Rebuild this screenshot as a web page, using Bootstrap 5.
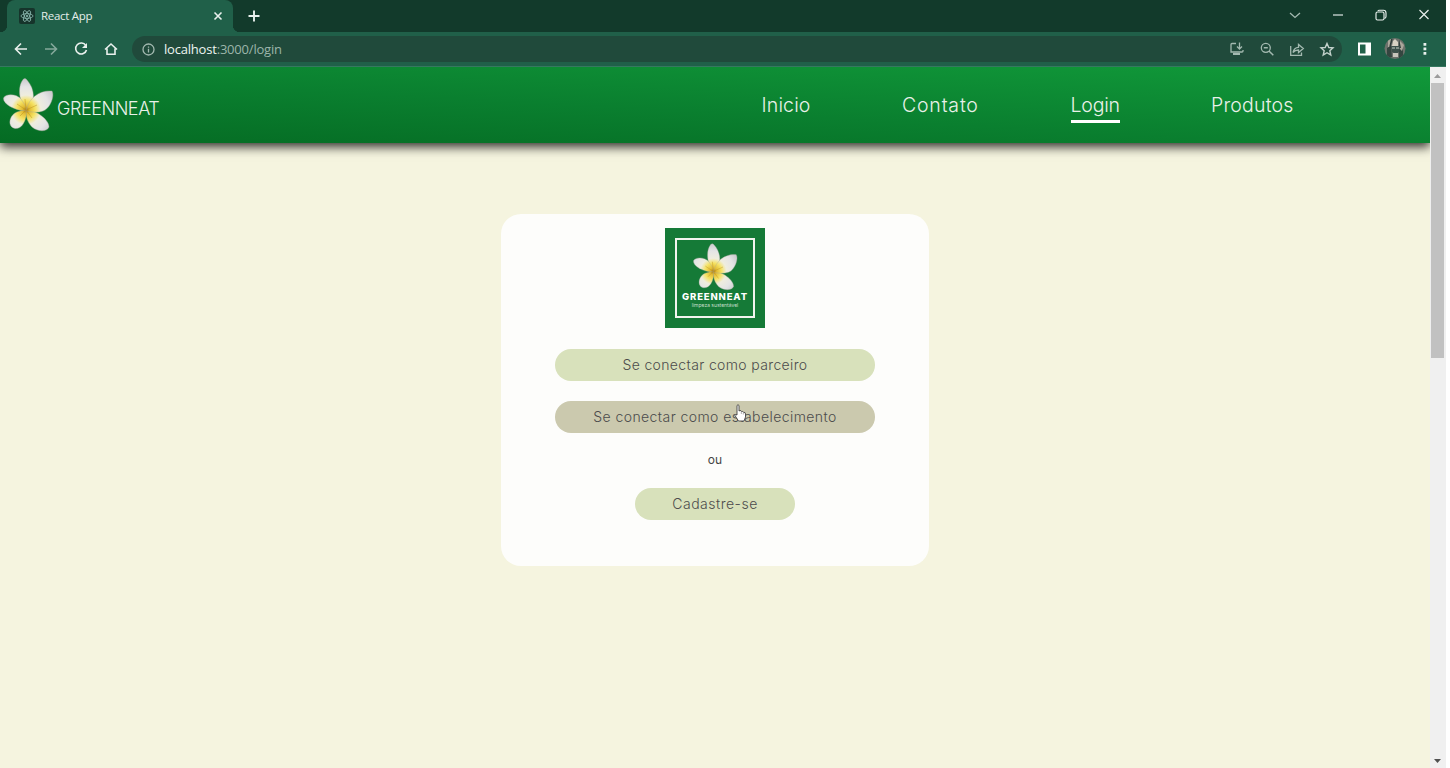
<!DOCTYPE html>
<html lang="pt-BR">
<head>
<meta charset="utf-8">
<title>React App</title>
<link href="https://cdn.jsdelivr.net/npm/bootstrap@5.3.0/dist/css/bootstrap.min.css" rel="stylesheet">
<script src="https://cdn.jsdelivr.net/npm/bootstrap@5.3.0/dist/js/bootstrap.bundle.min.js" defer></script>
<style>
body{font-family:Inter,"Liberation Sans",sans-serif;background:#fff;overflow:hidden}
.browser{width:1446px;height:768px}
.tabs{height:32px;background:#123a2b;padding-left:7px}
.tab-on{width:226px;height:32px;background:#206049;border-radius:8px 8px 0 0;padding-left:12px;padding-right:9px;position:relative;color:#e4eeea;font:11.5px "Open Sans",sans-serif}
.tab-on span{letter-spacing:-.3px;padding-bottom:2px}
.tab-on::before,.tab-on::after{content:"";position:absolute;bottom:0;width:7px;height:7px}
.tab-on::before{left:-7px;background:radial-gradient(circle at 0 0,transparent 7px,#206049 7.5px)}
.tab-on::after{right:-7px;background:radial-gradient(circle at 100% 0,transparent 7px,#206049 7.5px)}
.fav{width:16px;height:16px;background:#16342b;border-radius:2px;margin-right:6px}
.new-tab{margin-left:14px}
.win-ctl{gap:29px;padding-right:15px;padding-bottom:3px}
.toolbar{height:35px;background:#206049;border-bottom:1px solid #367860;padding-left:13px}
.nav-icons{gap:14px;width:119px}
.omni{width:1210px;height:26px;border-radius:13px;background:#204a3b;padding:0 7px 0 8px;font:13px "Open Sans",sans-serif;color:#9cb5aa}
.omni b{font-weight:400;color:#eef5f1}
.omni-actions{gap:14px}
.tool-end{padding-left:15px;gap:12px}
.addr{padding-left:8px;letter-spacing:-.2px}
svg{display:block;flex:none}
.ic{fill:none;stroke:#e9f0ed;stroke-width:1.6}
.dim{stroke:#a3b9b0;stroke-width:1.3}
.thin{stroke-width:1.15}
.page-area{height:701px}
.site{background:#f5f4df;width:1430px;overflow:hidden}
.site-head{height:76px;background:linear-gradient(to top right,#056b23 0%,#0a7f2f 45%,#119a3a 100%);box-shadow:0 4px 10px 0 rgba(0,0,0,.8);color:#e9f1e9;position:relative;padding-left:3px}
.brand-name{font-size:18px;font-weight:300;line-height:24px;margin-left:3px;padding-top:7px;letter-spacing:-.45px}
.menu{gap:91.5px;margin-right:136px;font-size:19.5px;font-weight:300;line-height:33px;padding-top:1px}
.menu a{color:#e9f1e9;text-decoration:none;white-space:nowrap;border-bottom:3px solid transparent;height:34px}
.menu a.on{border-color:#fff}
.m1{width:49px;letter-spacing:.15px}.m2{width:77px;letter-spacing:.8px}.m3{width:49px;letter-spacing:-.2px}.m4{width:83px;letter-spacing:.2px}
.login-box{width:428px;height:352px;border-radius:20px;background:#fdfdfb;margin:71px auto 0;padding-top:14px;color:#555}
.logo-sq{width:100px;height:100px;background:#157a37;padding:10px;margin-bottom:21px}
.logo-in{border:2.5px solid #f2f5ef;height:80px;color:#fff;font-size:9.5px;line-height:11px;padding-top:3px}
.logo-in b{font-weight:800;letter-spacing:.85px}
.logo-in i{font-style:normal;font-size:5px;line-height:7px;color:#c7dfcc}
.pill{width:320px;height:32px;border-radius:16px;background:#d8e1bb;color:#4c4c4c;font-size:14px;font-weight:300;border:0;padding:0;margin-bottom:20px;line-height:32px;white-space:nowrap;letter-spacing:.36px}
.pill.hov{background:#cbc9ae;letter-spacing:.42px;margin-bottom:19px}
.pill.short{width:160px;letter-spacing:.5px}
.or{font-size:12px;line-height:16px;margin-bottom:20px;color:#444}
.sbar{width:16px;background:#f0f0f0;padding:0 2px 0 1px}
.thumb{height:275px;background:#c1c1c1}
.hand{position:absolute;left:733.5px;top:404px}
</style>
</head>
<body>
<svg width="0" height="0" class="position-absolute"><defs>
<radialGradient id="pg" gradientUnits="userSpaceOnUse" cx="23" cy="32" r="31"><stop offset="0" stop-color="#a77d16"/><stop offset=".12" stop-color="#e2bb32"/><stop offset=".3" stop-color="#f5e263"/><stop offset=".48" stop-color="#efedde"/><stop offset=".75" stop-color="#e4e4e5"/><stop offset="1" stop-color="#cbcbce"/></radialGradient>
<symbol id="flower" viewBox="0 0 51 54"><g fill="url(#pg)" stroke="#aaa99d" stroke-width=".4">
<path d="M24 32C16 25 14 9 20 1.500Q22-.5 24 2C32 11 33 24 24 32Z"/>
<path d="M22 33C11 32 0 26 .5 20C3 15 14 16 18 21Q22 26 24 32Z"/>
<path d="M24 32C23 44 19 51 12 50.500C4 49 6 37 14 34Q19 32 24 32Z"/>
<path d="M23 32C34 32 46 42 46 49C44 54 35 54 29 49C24 44 23 38 23 32Z"/>
<path d="M23 33C26 19 37 12 49 13C52 18 47 31 40 33C34 35 28 34 23 33Z"/></g>
<path d="M23 32L22 21M23 32L14 26M23 32L17 38M23 32L29 40M23 32L34 27" stroke="#bd9120" stroke-width=".8" opacity=".6"/></symbol>
</defs></svg>
<div class="browser d-flex flex-column">
<div class="tabs d-flex">
 <div class="tab-on d-flex align-items-center">
  <div class="fav d-flex align-items-center justify-content-center"><svg width="14" height="14" viewBox="0 0 14 14" fill="none" stroke="#8dbbb2" stroke-width=".8"><ellipse cx="7" cy="7" rx="6" ry="2.400"/><ellipse cx="7" cy="7" rx="6" ry="2.400" transform="rotate(60 7 7)"/><ellipse cx="7" cy="7" rx="6" ry="2.400" transform="rotate(120 7 7)"/><circle cx="7" cy="7" r=".8" fill="#8dbbb2"/></svg></div>
  <span class="me-auto">React App</span>
  <svg class="ic" width="12" height="12" viewBox="0 0 12 12"><path d="M2.500 2.500L9.500 9.500M9.500 2.500L2.500 9.500"/></svg>
 </div>
 <svg class="ic my-auto new-tab" width="14" height="14" viewBox="0 0 14 14"><path d="M7 1.500V12.500M1.500 7H12.500" stroke-width="1.900"/></svg>
 <div class="win-ctl d-flex align-items-center ms-auto">
  <svg class="ic dim" width="14" height="14" viewBox="0 0 14 14"><path d="M2 5L7 9.500L12 5"/></svg>
  <svg class="ic thin" width="14" height="14" viewBox="0 0 14 14"><path d="M2 7H12"/></svg>
  <svg class="ic thin" width="14" height="14" viewBox="0 0 14 14"><rect x="2" y="4" width="8" height="8" rx="1.500"/><path d="M4 3Q4 2.200 5.500 2.200H9.500Q12 2.200 12 5V8.500Q12 10 10.500 10.500"/></svg>
  <svg class="ic thin" width="14" height="14" viewBox="0 0 14 14"><path d="M2.500 2L11.500 11M11.500 2L2.500 11"/></svg>
 </div>
</div>
<div class="toolbar d-flex align-items-center">
 <div class="nav-icons d-flex">
  <svg class="ic" width="16" height="16" viewBox="0 0 16 16"><path d="M14 8H3M8 2.500L2.500 8L8 13.500"/></svg>
  <svg class="ic opacity-50" width="16" height="16" viewBox="0 0 16 16"><path d="M2 8H13M8 2.500L13.500 8L8 13.500"/></svg>
  <svg class="ic" width="16" height="16" viewBox="0 0 16 16"><path d="M12.800 4.500A5.500 5.500 0 1 0 13.500 9"/><path d="M14 2V7H9Z" fill="#e9f0ed" stroke="none"/></svg>
  <svg class="ic" width="16" height="16" viewBox="0 0 16 16"><path d="M2 8.500L8 3L14 8.500M4 7.500V13.300H12V7.500"/></svg>
 </div>
 <div class="omni d-flex align-items-center">
  <svg class="ic dim" width="16" height="16" viewBox="0 0 16 16"><circle cx="8.500" cy="8.500" r="5.500"/><path d="M8.500 7.800V11.500M8.500 5.500V6.700"/></svg>
  <span class="me-auto addr"><b>localhost</b>:3000/login</span>
  <div class="omni-actions d-flex">
  <svg class="ic dim" width="16" height="16" viewBox="0 0 16 16"><path d="M7 2.500H3Q2 2.500 2 3.500V11H13Q14 11 14 10V9M10.500 1.500V8M8 5.500L10.500 8L13 5.500"/><path d="M4 13H11" stroke-width="2"/></svg>
  <svg class="ic dim" width="16" height="16" viewBox="0 0 16 16"><circle cx="6.800" cy="6.800" r="4.500"/><path d="M10 10L14.300 14.300M4.800 6.800H8.800" stroke-width="1.500"/></svg>
  <svg class="ic dim" width="16" height="16" viewBox="0 0 16 16"><path d="M1.700 5V14.300H12.500V11.500M4 11.500Q5 6.500 9.500 6.300V3.500L14.300 7.500L9.500 11.500V9Q6 9 4 11.500Z"/></svg>
  <svg class="ic dim" width="16" height="16" viewBox="0 0 16 16"><path d="M8 2.500L9.800 6.500L14 6.900L10.800 9.700L11.800 14L8 11.700L4.200 14L5.200 9.700L2 6.900L6.200 6.500Z" stroke="#c3d1cb" stroke-width="1.400"/></svg>
  </div>
 </div>
 <div class="tool-end d-flex align-items-center">
  <svg width="15" height="15" viewBox="0 0 15 15"><path d="M2 1.500H13V12.500H2Z" fill="none" stroke="#fff" stroke-width="2"/><path d="M8.500 1.500H13V12.500H8.500Z" fill="#fff"/></svg>
  <svg width="22" height="22" viewBox="0 0 22 22"><clipPath id="av"><circle cx="11" cy="10.500" r="10.500"/></clipPath><g clip-path="url(#av)"><path fill="#6c716b" d="M0 0H22V22H0Z"/><path fill="#344640" d="M3 10L7 8L8 19L3 21Z M15 9H19V20H15Z"/><path fill="#aaa69b" d="M4 1H8V9H4Z M16 3L20 7L18 13L15 10Z"/><path fill="#303d39" d="M7 1H8.500L7 10H5ZM15 1L17 10H15Z"/><path fill="#d8d2c3" d="M9 3L11 1L14 4V8H8Z"/><path fill="#3d514b" d="M7 8H16L15 14L12 16L8 14Z"/><path fill="#819087" d="M8 9H11V11H8ZM12 9H15V11H12Z"/><path fill="#c8c5bc" d="M9 15H14V19H9Z"/></g></svg>
  <svg width="14" height="16" viewBox="0 0 14 16" fill="#e9f0ed"><path d="M5.500 2H8.300V4.800H5.500ZM5.500 6.500H8.300V9.300H5.500ZM5.500 11H8.300V13.800H5.500Z"/></svg>
 </div>
</div>
<div class="page-area d-flex">
 <main class="site">
  <header class="site-head d-flex align-items-center">
   <svg width="51" height="54"><use href="#flower"/></svg>
   <span class="brand-name">GREENNEAT</span>
   <nav class="menu d-flex ms-auto"><a class="m1" href="#">Inicio</a><a class="m2" href="#">Contato</a><a class="m3 on" href="#">Login</a><a class="m4" href="#">Produtos</a></nav>
  </header>
  <section class="login-box d-flex flex-column align-items-center">
   <div class="logo-sq"><div class="logo-in d-flex flex-column align-items-center"><svg width="45" height="48"><use href="#flower"/></svg><b>GREENNEAT</b><i>limpeza sustentável</i></div></div>
   <button class="pill">Se conectar como parceiro</button>
   <button class="pill hov">Se conectar como estabelecimento</button>
   <div class="or">ou</div>
   <button class="pill short">Cadastre-se</button>
  </section>
 </main>
 <div class="sbar d-flex flex-column">
  <svg width="13" height="16" viewBox="0 0 13 16"><path d="M3 11L6.500 7L10 11Z" fill="#9b9b9b"/></svg>
  <div class="thumb"></div>
  <svg class="mt-auto" width="13" height="14" viewBox="0 0 13 14"><path d="M3 5L6.500 9L10 5Z" fill="#505050"/></svg>
 </div>
</div>
</div>
<svg class="hand" width="13" height="19" viewBox="0 0 13 19"><path d="M3 1.500Q4-.1 5 1.500V7L6 6.500Q7.300 6.500 7.500 7.500Q9 7 9.500 8.300Q11.500 8 11.500 10V13L10 17H4.500L1 11.500Q1 10 3 11Z" fill="#fff" stroke="#444" stroke-width=".9"/><path d="M7.300 8V10M9.300 8.500V10.500" stroke="#777" stroke-width=".6"/></svg>
</body>
</html>
